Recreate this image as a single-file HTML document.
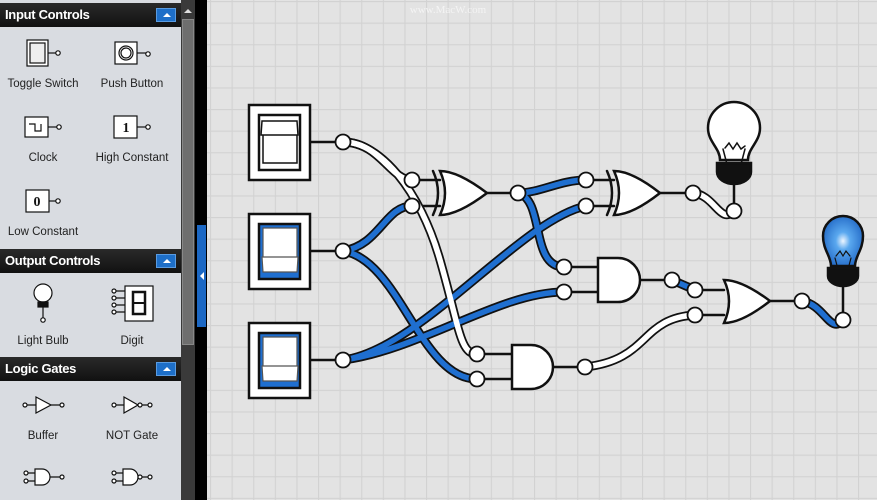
<!DOCTYPE html>
<html><head><meta charset="utf-8"><style>
html,body{margin:0;padding:0;width:877px;height:500px;overflow:hidden;background:#000;font-family:"Liberation Sans",sans-serif}
.side{position:absolute;left:0;top:0;width:181px;height:500px;background:#d9dce1}
.hdr{position:absolute;left:0;width:181px;height:24px;background:linear-gradient(#2a2a2a,#111);color:#fff;font-weight:bold;font-size:13px;line-height:24px;padding-left:5px;box-sizing:border-box;letter-spacing:-0.3px}
.hdr i{position:absolute;right:5px;top:5px;width:20px;height:14px;background:#1e6fc8;border:1px solid #5a9be0;box-sizing:border-box}
.hdr i:after{content:"";position:absolute;left:6px;top:4px;border-left:4px solid transparent;border-right:4px solid transparent;border-bottom:4px solid #fff}
.lbl{position:absolute;font-size:11.5px;color:#222;text-align:center;width:90px}
</style></head><body>
<div class="side">
<div class="hdr" style="top:3px">Input Controls<i></i></div>
<div class="hdr" style="top:249px">Output Controls<i></i></div>
<div class="hdr" style="top:357px">Logic Gates<i></i></div>
<div class="lbl" style="left:-2px;top:78px">Toggle Switch</div>
<div class="lbl" style="left:87px;top:78px">Push Button</div>
<div class="lbl" style="left:-2px;top:152px">Clock</div>
<div class="lbl" style="left:87px;top:152px">High Constant</div>
<div class="lbl" style="left:-2px;top:226px">Low Constant</div>
<div class="lbl" style="left:-2px;top:335px">Light Bulb</div>
<div class="lbl" style="left:87px;top:335px">Digit</div>
<div class="lbl" style="left:-2px;top:430px">Buffer</div>
<div class="lbl" style="left:87px;top:430px">NOT Gate</div>
<svg style="position:absolute;left:0;top:0" width="181" height="500" fill="none" stroke="#111" stroke-width="1.2">
<g fill="#fff">
<rect x="27" y="40" width="21" height="26"/><rect x="30" y="43" width="15" height="20" fill="#eee"/>
<line x1="48" y1="53" x2="56" y2="53"/><circle cx="58" cy="53" r="2.2"/>
<rect x="115" y="42" width="22" height="22"/><circle cx="126" cy="53" r="7"/><circle cx="126" cy="53" r="5"/>
<line x1="137" y1="53" x2="146" y2="53"/><circle cx="148" cy="54" r="2.2"/>
<rect x="25" y="117" width="23" height="20"/><path d="M29 124h6v7h6v-7" />
<line x1="48" y1="127" x2="57" y2="127"/><circle cx="59" cy="127" r="2.2"/>
<rect x="114" y="116" width="23" height="22"/><line x1="137" y1="127" x2="146" y2="127"/><circle cx="148" cy="127" r="2.2"/>
<rect x="26" y="190" width="23" height="22"/><line x1="49" y1="201" x2="56" y2="201"/><circle cx="58" cy="201" r="2.2"/>
<circle cx="43" cy="293" r="9"/><rect x="38" y="302" width="10" height="5" fill="#111"/><line x1="43" y1="307" x2="43" y2="318"/><circle cx="43" cy="320" r="2.2"/>
<rect x="125" y="286" width="28" height="35"/><rect x="133" y="292" width="12" height="22" stroke-width="2.5" fill="#fff"/><line x1="133" y1="303" x2="145" y2="303" stroke-width="2"/>
<path d="M116 291h9M116 298h9M116 305h9M116 312h9"/><circle cx="114" cy="291" r="2"/><circle cx="114" cy="298" r="2"/><circle cx="114" cy="305" r="2"/><circle cx="114" cy="312" r="2"/>
<path d="M36 397l15 8-15 8z"/><path d="M26 405h10M51 405h9"/><circle cx="25" cy="405" r="2"/><circle cx="62" cy="405" r="2"/>
<path d="M124 397l14 8-14 8z"/><circle cx="140" cy="405" r="2"/><path d="M114 405h10M142 405h6"/><circle cx="114" cy="405" r="2"/><circle cx="150" cy="405" r="2"/>
<path d="M35 469h7a8 8 0 0 1 0 16h-7z"/><path d="M27 473h8M27 481h8M50 477h10"/><circle cx="26" cy="473" r="2"/><circle cx="26" cy="481" r="2"/><circle cx="62" cy="477" r="2"/>
<path d="M123 469h7a8 8 0 0 1 0 16h-7z"/><circle cx="140" cy="477" r="2"/><path d="M115 473h8M115 481h8M142 477h6"/><circle cx="114" cy="473" r="2"/><circle cx="114" cy="481" r="2"/><circle cx="150" cy="477" r="2"/>
</g>
<text x="126" y="132" font-family="Liberation Serif" font-weight="bold" font-size="14" fill="#111" stroke="none" text-anchor="middle">1</text>
<text x="37" y="206" font-family="Liberation Serif" font-weight="bold" font-size="14" fill="#111" stroke="none" text-anchor="middle">0</text>
</svg>
</div>
<div style="position:absolute;left:181px;top:0;width:14px;height:500px;background:#3a3a3a"></div>
<div style="position:absolute;left:182px;top:19px;width:12px;height:326px;background:#6e6e6e;border:1px solid #888;box-sizing:border-box"></div>
<div style="position:absolute;left:184px;top:9px;border-left:4px solid transparent;border-right:4px solid transparent;border-bottom:4px solid #ddd"></div>
<div style="position:absolute;left:197px;top:225px;width:9px;height:102px;background:#1c68c4"></div>
<div style="position:absolute;left:200px;top:272px;border-top:4px solid transparent;border-bottom:4px solid transparent;border-right:4px solid #fff"></div>
<svg style="position:absolute;left:207px;top:0" width="670" height="500">
<defs><pattern id="g" width="21.6" height="21.6" patternUnits="userSpaceOnUse" x="3" y="1"><rect width="21.6" height="21.6" fill="#e3e3e3"/><path d="M0 0.5H21.6M0.5 0V21.6" stroke="#d2d2d2" stroke-width="1.2"/></pattern></defs>
<rect width="670" height="500" fill="url(#g)"/>
<text x="241" y="13" font-size="11" fill="#f4f4f4" text-anchor="middle" font-family="Liberation Serif">www.MacW.com</text>
</svg>
<svg style="position:absolute;left:0;top:0" width="877" height="500" stroke-linecap="round" fill="none">
<g stroke="#111" stroke-width="2.5">
<path d="M311 142H343M311 251H343M311 360H343"/>
<path d="M412 180H440M412 206H440M487 193H518"/>
<path d="M477 354H512M477 379H512M553 367H585"/>
<path d="M586 180H614M586 206H614M660 193H693"/>
<path d="M564 267H598M564 292H598M640 280H672"/>
<path d="M695 290H724M695 315H724M770 301H802"/>
<path d="M734 180V211M843 285V320"/>
</g>
<g stroke="#111" stroke-width="9">
<path d="M343 142C380 142 420 190 440 260S460 354 477 354"/>
<path d="M343 142C380 142 390 180 412 180"/>
<path d="M343 251C380 245 385 206 412 206"/>
<path d="M343 251C400 260 420 379 477 379"/>
<path d="M343 360C420 350 520 220 586 206"/>
<path d="M343 360C420 350 500 292 564 292"/>
<path d="M518 193C540 193 560 180 586 180"/>
<path d="M518 193C545 200 530 267 564 267"/>
<path d="M672 280L695 290"/>
<path d="M585 367C650 360 640 318 695 315"/>
<path d="M693 193C715 195 720 225 734 211"/>
<path d="M802 301C825 305 830 335 843 320"/>
</g>
<g stroke-width="5.5">
<path stroke="#1f6fd0" d="M343 251C400 260 420 379 477 379"/>
<path stroke="#1f6fd0" d="M343 360C420 350 520 220 586 206"/>
<path stroke="#1f6fd0" d="M343 360C420 350 500 292 564 292"/>
<path stroke="#fff" d="M343 142C380 142 420 190 440 260S460 354 477 354"/>
<path stroke="#fff" d="M343 142C380 142 390 180 412 180"/>
<path stroke="#1f6fd0" d="M343 251C380 245 385 206 412 206"/>
<path stroke="#1f6fd0" d="M518 193C540 193 560 180 586 180"/>
<path stroke="#1f6fd0" d="M518 193C545 200 530 267 564 267"/>
<path stroke="#1f6fd0" d="M672 280L695 290"/>
<path stroke="#fff" d="M585 367C650 360 640 318 695 315"/>
<path stroke="#fff" d="M693 193C715 195 720 225 734 211"/>
<path stroke="#1f6fd0" d="M802 301C825 305 830 335 843 320"/>
</g>
<radialGradient id="bl" cx="0.5" cy="0.5" r="0.6"><stop offset="0" stop-color="#eef6ff"/><stop offset="0.3" stop-color="#5aa8ef"/><stop offset="1" stop-color="#1a60c0"/></radialGradient>
<g stroke="#111" stroke-width="2.5" fill="#fff">
<rect x="249" y="105" width="61" height="75"/><rect x="249" y="214" width="61" height="75"/><rect x="249" y="323" width="61" height="75"/>
<rect x="259" y="115" width="41" height="55"/><path d="M262 121H297L298 135H261Z M263 135H297V163H263Z" stroke-width="1.5"/>
<rect x="259" y="224" width="41" height="55" fill="#1f6fd0"/><path d="M263 228H297V257H263Z M262 257H298L297 272H263Z" stroke-width="1.2" stroke="#555"/>
<rect x="259" y="333" width="41" height="55" fill="#1f6fd0"/><path d="M263 337H297V366H263Z M262 366H298L297 381H263Z" stroke-width="1.2" stroke="#555"/>
<path d="M440 171Q458 171 487 193Q458 215 440 215Q450 193 440 171Z"/><path d="M433 171Q443 193 433 215" fill="none"/>
<path d="M614 171Q632 171 660 193Q632 215 614 215Q624 193 614 171Z"/><path d="M607 171Q617 193 607 215" fill="none"/>
<path d="M724 280Q742 280 770 301Q742 323 724 323Q734 301 724 280Z"/>
<path d="M512 345H531A22 22 0 0 1 531 389H512Z"/>
<path d="M598 258H618A22 22 0 0 1 618 302H598Z"/>
<path d="M720 160C720 148 708 142 708 128A26 26 0 0 1 760 128C760 142 748 148 748 160Z"/>
<path d="M723 149L728 168M745 149L740 168M725 148L729 143L733 149L737 143L741 149L745 146" stroke-width="1.5" fill="none"/>
<path d="M717 163H751V172A17 12 0 0 1 717 172Z" fill="#111"/>
<path d="M831 266C831 256 823 250 823 236A20 20 0 0 1 863 236C863 250 855 256 855 266Z" fill="url(#bl)"/>
<path d="M835 258L839 273M851 258L847 273M836 256L840 251L843 256L846 251L850 256" stroke-width="1.2" fill="none"/>
<path d="M828 268H858V276A15 10 0 0 1 828 276Z" fill="#111"/>
</g>
<g stroke="#111" stroke-width="1.8" fill="#fff">
<circle cx="343" cy="142" r="7.5"/><circle cx="343" cy="251" r="7.5"/><circle cx="343" cy="360" r="7.5"/>
<circle cx="412" cy="180" r="7.5"/><circle cx="412" cy="206" r="7.5"/><circle cx="518" cy="193" r="7.5"/>
<circle cx="477" cy="354" r="7.5"/><circle cx="477" cy="379" r="7.5"/><circle cx="585" cy="367" r="7.5"/>
<circle cx="586" cy="180" r="7.5"/><circle cx="586" cy="206" r="7.5"/><circle cx="693" cy="193" r="7.5"/>
<circle cx="564" cy="267" r="7.5"/><circle cx="564" cy="292" r="7.5"/><circle cx="672" cy="280" r="7.5"/>
<circle cx="695" cy="290" r="7.5"/><circle cx="695" cy="315" r="7.5"/><circle cx="802" cy="301" r="7.5"/>
<circle cx="734" cy="211" r="7.5"/><circle cx="843" cy="320" r="7.5"/>
</g>
</svg>
</body></html>
